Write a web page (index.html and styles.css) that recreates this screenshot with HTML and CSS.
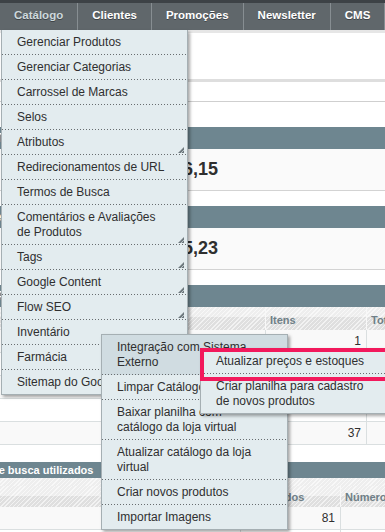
FILE: index.html
```html
<!DOCTYPE html>
<html lang="pt-BR">
<head>
  <meta charset="UTF-8">
  <meta name="viewport" content="width=device-width, initial-scale=1.0">
  <title>Painel - Administração</title>
  <link rel="stylesheet" href="styles.css">
</head>
<body>
  <div class="page">
    <div class="header-top"></div>
    <ul class="nav">
      <li class="nav-item active">Catálogo
        <ul class="menu">
          <li>Gerenciar Produtos</li>
          <li>Gerenciar Categorias</li>
          <li>Carrossel de Marcas</li>
          <li>Selos</li>
          <li class="parent">Atributos<svg class="arrow" width="6" height="6" viewBox="0 0 6 6"><path d="M6 0V6H0Z" fill="#6e797e"/><path d="M6.5 2.5L2.5 6.5" stroke="#cbd5d9" stroke-width="0.8"/></svg></li>
          <li>Redirecionamentos de URL</li>
          <li>Termos de Busca</li>
          <li class="parent">Comentários e Avaliações de Produtos<svg class="arrow" width="6" height="6" viewBox="0 0 6 6"><path d="M6 0V6H0Z" fill="#6e797e"/><path d="M6.5 2.5L2.5 6.5" stroke="#cbd5d9" stroke-width="0.8"/></svg></li>
          <li class="parent">Tags<svg class="arrow" width="6" height="6" viewBox="0 0 6 6"><path d="M6 0V6H0Z" fill="#6e797e"/><path d="M6.5 2.5L2.5 6.5" stroke="#cbd5d9" stroke-width="0.8"/></svg></li>
          <li class="parent">Google Content<svg class="arrow" width="6" height="6" viewBox="0 0 6 6"><path d="M6 0V6H0Z" fill="#6e797e"/><path d="M6.5 2.5L2.5 6.5" stroke="#cbd5d9" stroke-width="0.8"/></svg></li>
          <li class="parent">Flow SEO<svg class="arrow" width="6" height="6" viewBox="0 0 6 6"><path d="M6 0V6H0Z" fill="#6e797e"/><path d="M6.5 2.5L2.5 6.5" stroke="#cbd5d9" stroke-width="0.8"/></svg></li>
          <li class="parent">Inventário
            <ul class="menu submenu">
              <li class="parent over">Integração com Sistema Externo
                <ul class="menu submenu sub2">
                  <li class="marked">Atualizar preços e estoques</li>
                  <li>Criar planilha para cadastro de novos produtos</li>
                </ul>
              </li>
              <li>Limpar Catálogo</li>
              <li>Baixar planilha com catálogo da loja virtual</li>
              <li>Atualizar catálogo da loja virtual</li>
              <li>Criar novos produtos</li>
              <li>Importar Imagens</li>
            </ul>
          </li>
          <li>Farmácia</li>
          <li>Sitemap do Google</li>
        </ul>
      </li>
      <li class="nav-item">Clientes</li>
      <li class="nav-item">Promoções</li>
      <li class="nav-item">Newsletter</li>
      <li class="nav-item">CMS</li>
      <li class="nav-item">Relatórios</li>
    </ul>

    <div class="dashboard">
      <div class="notice"></div>
      <div class="toolbar"></div>

      <div class="box">
        <div class="box-head">Vendas Totais</div>
        <div class="box-body"><span class="amount">R$ 48.736,15</span></div>
      </div>

      <div class="box">
        <div class="box-head">Média de Pedidos</div>
        <div class="box-body"><span class="amount">R$ 325,23</span></div>
      </div>

      <div class="box">
        <div class="box-head">Últimos Pedidos</div>
        <div class="grid-row grid-head orders">
          <div class="cell">Cliente</div>
          <div class="cell">Itens</div>
          <div class="cell">Total</div>
        </div>
        <div class="grid-body">
          <div class="grid-row orders"><div class="cell">Ana</div><div class="cell num">1</div><div class="cell num">R$ 89,90</div></div>
          <div class="grid-row orders"><div class="cell">Paulo</div><div class="cell num">3</div><div class="cell num">R$ 214,70</div></div>
          <div class="grid-row orders"><div class="cell">Rita</div><div class="cell num">2</div><div class="cell num">R$ 58,00</div></div>
          <div class="grid-row orders"><div class="cell">Lia</div><div class="cell num">5</div><div class="cell num">R$ 312,45</div></div>
          <div class="grid-row orders"><div class="cell">Caio</div><div class="cell num">37</div><div class="cell num">R$ 1.249,00</div></div>
        </div>
      </div>

      <div class="box">
        <div class="box-head small">Termos de busca utilizados</div>
        <div class="grid-strip"></div>
        <div class="grid-row grid-head compact terms">
          <div class="cell">Termo</div>
          <div class="cell">Resultados</div>
          <div class="cell">Número de usos</div>
        </div>
        <div class="grid-body">
          <div class="grid-row terms"><div class="cell">dipirona</div><div class="cell num">81</div><div class="cell num">12</div></div>
          <div class="grid-row terms"><div class="cell">protetor</div><div class="cell num">24</div><div class="cell num">9</div></div>
        </div>
      </div>
    </div>
  </div>
</body>
</html>
```

FILE: styles.css
```css
* {
  box-sizing: border-box;
}

body {
  margin: 0;
  font-family: "Liberation Sans", Arial, sans-serif;
  font-size: 12px;
  color: #2f2f2f;
  background: #fff;
}

.page {
  position: relative;
  width: 385px;
  height: 532px;
  overflow: hidden;
}

/* top navigation */
.header-top {
  height: 3px;
  background: #3d4246;
}

.nav {
  display: flex;
  height: 27px;
  margin: 0;
  padding: 0;
  list-style: none;
  background: #60676b;
}

.nav-item {
  padding: 0 14px;
  border-right: 1px solid #878e92;
  font-size: 11.5px;
  font-weight: bold;
  line-height: 25px;
  color: #fff;
  text-shadow: 0 1px 0 #3f4448;
  white-space: nowrap;
}

.nav-item.active {
  color: #cdd8dc;
}

/* dropdown menus */
.menu {
  position: absolute;
  top: 30px;
  left: 1px;
  width: 187px;
  margin: 0;
  padding: 0;
  list-style: none;
  border: 1px solid #a5afb3;
  border-top: 0;
  background: #e3ecef;
  box-shadow: 2px 2px 3px rgba(0, 0, 0, 0.35);
  font-size: 12px;
  font-weight: normal;
  line-height: 15px;
  color: #2f2f2f;
  text-shadow: none;
  white-space: normal;
}

.menu li {
  position: relative;
  padding: 5px 19px 5px 15px;
  background: repeating-linear-gradient(90deg, #686d70 0 1px, transparent 1px 3px) left bottom / 100% 1px no-repeat;
}

.menu li:last-child {
  padding-bottom: 4px;
  background: none;
}

.menu .over {
  background-color: #d0dce1;
}

.menu .arrow {
  position: absolute;
  right: 3px;
  bottom: 2px;
}

.submenu {
  top: 14px;
  left: 99px;
  z-index: 2;
  border-top: 1px solid #a5afb3;
}

.submenu.sub2 {
  top: 13px;
  left: 98px;
}

.marked::after {
  content: "";
  position: absolute;
  left: -1px;
  top: -1px;
  width: 185px;
  height: 25px;
  border: 4px solid #f2195c;
  z-index: 1;
}

/* dashboard behind the menu */
.dashboard {
  width: 470px;
  margin-left: -60px;
}

.notice {
  height: 52px;
  border-top: 3px solid #e6e6e6;
  border-bottom: 3px solid #dedede;
}

.toolbar {
  height: 20px;
  margin-bottom: 25px;
  border-bottom: 1px solid #cfcfcf;
}

.box + .box {
  margin-top: 15px;
}

.box-head {
  height: 22px;
  padding: 0 10px;
  background: #6e8690;
  color: #fff;
  font-weight: bold;
  line-height: 22px;
  white-space: nowrap;
}

.box-head.small {
  height: 16px;
  padding-top: 1px;
  font-size: 11px;
  line-height: 15px;
}

.box:last-child {
  margin-top: 17px;
}

.box-body {
  padding: 9px 0 10px;
  background: #fafafa;
  border-bottom: 1px solid #d3d3d3;
}

.amount {
  display: block;
  width: 278px;
  text-align: right;
  font-size: 18px;
  font-weight: bold;
  line-height: 22px;
  color: #2f2f2f;
  white-space: nowrap;
}

/* grids */
.grid-row {
  display: grid;
}

.grid-row.orders {
  grid-template-columns: 325px 101px 100px;
}

.grid-row.terms {
  grid-template-columns: 300px 100px 100px;
}

.grid-head {
  background:
    repeating-linear-gradient(135deg, rgba(255, 255, 255, 0.6) 0 1px, transparent 1px 3px),
    linear-gradient(#eeeeee 10px, #dfdfdf 10px);
}

.grid-strip {
  height: 8px;
  background:
    repeating-linear-gradient(135deg, rgba(255, 255, 255, 0.6) 0 1px, transparent 1px 3px),
    #eeeeee;
}

.cell {
  padding: 0 4px;
  overflow: hidden;
  white-space: nowrap;
}

.cell + .cell {
  border-left: 1px solid #dadfe0;
}

.grid-head .cell {
  padding-top: 4px;
  font-size: 11px;
  font-weight: bold;
  line-height: 19px;
  color: #6f7f87;
}

.grid-head.compact .cell {
  padding-top: 2px;
}

.grid-head .cell + .cell {
  border-left-color: #f8f8f8;
}

.grid-body .grid-row {
  height: 23px;
  line-height: 22px;
  border-bottom: 1px solid #dadfe0;
}

.grid-body .grid-row:nth-child(odd) {
  background: #f9f9f9;
}

.num {
  text-align: right;
  padding-right: 5px;
}
```
